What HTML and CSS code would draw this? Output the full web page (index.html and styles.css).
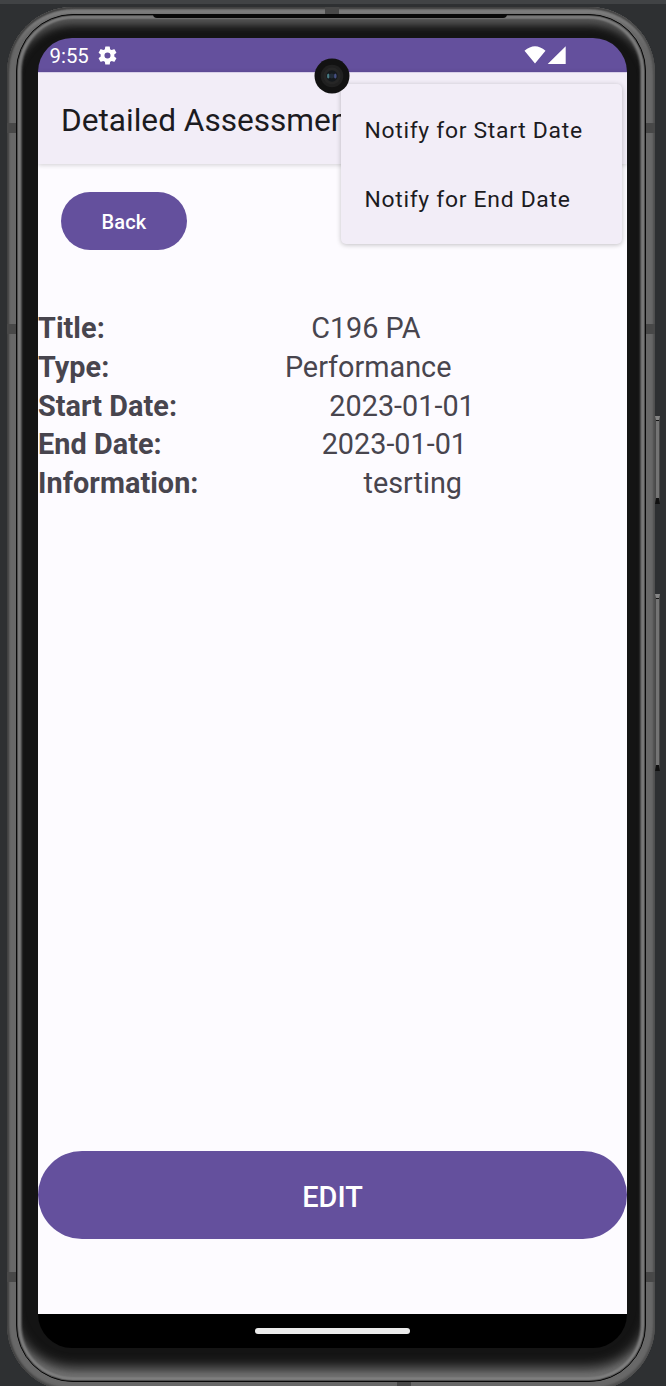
FILE: index.html
```html
<!DOCTYPE html>
<html lang="en">
<head>
<meta charset="utf-8">
<title>Detailed Assessment</title>
<link rel="stylesheet" href="styles.css">
</head>
<body>
<div class="desk">
  <span class="key key-power"></span>
  <span class="key key-volume"></span>
  <div class="phone">
    <span class="band band-top"></span>
    <span class="band band-bottom"></span>
    <span class="band band-l1"></span>
    <span class="band band-l2"></span>
    <span class="band band-l3"></span>
    <span class="band band-r1"></span>
    <span class="band band-r2"></span>
    <span class="band band-r3"></span>
    <div class="bezel">
      <span class="speaker"></span>
      <div class="screen">
        <div class="status">
          <span class="clock">9:55</span>
          <svg class="gear" viewBox="2 2 20 20"><path fill="#fff" d="M19.14 12.94c.04-.3.06-.61.06-.94s-.02-.64-.07-.94l2.03-1.58a.49.49 0 0 0 .12-.61l-1.92-3.32a.49.49 0 0 0-.59-.22l-2.39.96a7 7 0 0 0-1.62-.94l-.36-2.54a.48.48 0 0 0-.48-.41h-3.84a.48.48 0 0 0-.47.41l-.36 2.54c-.59.24-1.13.57-1.62.94l-2.39-.96a.48.48 0 0 0-.59.22L2.74 8.87a.48.48 0 0 0 .12.61l2.03 1.58c-.05.3-.09.63-.09.94s.02.64.07.94l-2.03 1.58a.49.49 0 0 0-.12.61l1.92 3.32c.12.22.37.29.59.22l2.39-.96c.5.38 1.03.7 1.62.94l.36 2.54c.05.24.24.41.48.41h3.84c.24 0 .44-.17.47-.41l.36-2.54a7 7 0 0 0 1.62-.94l2.39.96c.22.08.47 0 .59-.22l1.92-3.32a.48.48 0 0 0-.12-.61zM12 15.2a3.2 3.2 0 1 1 0-6.4 3.200 3.200 0 0 1 0 6.400z"/></svg>
          <svg class="signals" viewBox="0 0 42 18"><path fill="#fff" d="M0.500 4.800Q11-4.300 21.500 4.800L11 17.500ZM23.700 18L41.700 0.200V18Z"/></svg>
        </div>
        <header class="appbar">Detailed Assessment</header>
        <main class="content">
          <button class="back">Back</button>
          <dl class="details">
            <div class="row"><dt>Title:</dt><dd>C196 PA</dd></div>
            <div class="row"><dt>Type:</dt><dd>Performance</dd></div>
            <div class="row"><dt>Start Date:</dt><dd>2023-01-01</dd></div>
            <div class="row"><dt>End Date:</dt><dd>2023-01-01</dd></div>
            <div class="row"><dt>Information:</dt><dd>tesrting</dd></div>
          </dl>
          <button class="edit">EDIT</button>
        </main>
        <div class="nav"><span class="pill"></span></div>
        <div class="menu">
          <div class="item">Notify for Start Date</div>
          <div class="item">Notify for End Date</div>
        </div>
        <svg class="camera" viewBox="0 0 36 36"><circle cx="18" cy="18" r="17.500" fill="#121212"/><circle cx="18" cy="18" r="11.300" fill="#202020"/><circle cx="18" cy="18" r="8.500" fill="#262626"/><circle cx="18" cy="18" r="5.700" fill="#15191d"/><ellipse cx="14.300" cy="18" rx="1.300" ry="2.600" fill="#477b83"/><ellipse cx="21.300" cy="18" rx="1.300" ry="2.600" fill="#465084"/><circle cx="17.800" cy="18" r="2.400" fill="#222c38"/></svg>
      </div>
    </div>
  </div>
</div>
</body>
</html>
```
FILE: styles.css
```css
* { box-sizing: border-box; }
body { margin: 0; font-family: Roboto, sans-serif; }
.desk {
  position: relative;
  width: 666px;
  height: 1386px;
  padding: 3px 0 0 7px;
  overflow: hidden;
  background: #2e3032;
  border-top: 4px solid #414345;
}
.phone {
  position: relative;
  width: 648px;
  height: 1384px;
  padding: 7px 9px;
  border-radius: 66px;
  background: #686868;
  box-shadow: inset 2px 0 2px #424242, inset -2px 0 2px #505050, inset 0 2px 2px #3c3c3c, inset 0 -3px 2px #555, inset 0 6px 4px -3px #666, inset 0 10px 5px -5px #999;
}
.bezel {
  position: relative;
  width: 630px;
  height: 1368px;
  padding: 23px 20px 0 21px;
  border: 1px solid #080808;
  border-radius: 57px;
  background: #141414;
  box-shadow:
    inset 0 0 1px 1px #4a4a4a,
    inset 0 -8px 6px -3px #808080,
    inset 0 0 2px 4px #7c7c7c,
    inset 0 0 2px 5px #454545,
    inset 0 14px 8px -4px #5a5a5a,
    inset 0 -19px 12px -5px #686868;
}
.band { position: absolute; background: #484848; }
.band-top { left: 318px; top: 0; width: 14px; height: 8px; }
.band-bottom { left: 390px; top: 1375px; width: 14px; height: 8px; }
.band-l1, .band-l2, .band-l3 { left: 0; width: 10px; height: 10px; }
.band-r1, .band-r2, .band-r3 { right: 0; width: 9px; height: 10px; }
.band-l1, .band-r1 { top: 116px; }
.band-l2, .band-r2 { top: 317px; }
.band-l3, .band-r3 { top: 1265px; }
.speaker {
  position: absolute;
  left: 136px;
  top: -1px;
  width: 354px;
  height: 4px;
  border-radius: 0 0 8px 8px;
  background: #080808;
}
.key {
  position: absolute;
  left: 655px;
  width: 5px;
  border: 1px solid #494949;
  border-top: 4px solid #858585;
  border-bottom: 6px solid #101010;
  background: #747474;
  box-shadow: inset 0 1px #151515;
}
.key-power { top: 412px; height: 88px; }
.key-volume { top: 590px; height: 177px; }
.screen {
  position: relative;
  display: flex;
  flex-direction: column;
  width: 589px;
  height: 1310px;
  border-radius: 34px;
  overflow: hidden;
}
.status {
  display: flex;
  align-items: center;
  height: 34px;
  padding: 1px 61px 0 11.5px;
  background: #64509d;
  color: #fff;
}
.clock { width: 48px; font-size: 20.4px; line-height: 34px; }
.gear { width: 19px; height: 19px; margin-top: -1px; }
.signals { width: 42px; height: 18px; margin-left: auto; margin-top: -2px; }
.appbar {
  position: relative;
  height: 92px;
  padding: 2px 0 0 23px;
  background: #f2edf7;
  border-top: 1px solid #d8cfe8;
  box-shadow: 0 1px 5px rgba(0, 0, 0, .18);
  color: #1c1b1f;
  font-size: 31.6px;
  line-height: 91px;
  white-space: nowrap;
}
.content { display: flex; flex: 1; flex-direction: column; background: #fdfbff; }
button { border: 0; background: #64509d; color: #fff; font-family: inherit; font-weight: 500; }
.back {
  width: 126px;
  height: 58px;
  margin: 28px 0 0 23px;
  padding: 2px 0 0;
  border-radius: 29px;
  font-size: 20px;
  letter-spacing: .15px;
}
.details { margin: 59px 0 0; color: #48454e; font-size: 28.8px; }
.row { display: flex; height: 38.8px; line-height: 38.8px; }
dt { font-weight: 700; letter-spacing: .05px; }
dd { flex: 1; margin: 0; text-align: center; }
.edit {
  width: 100%;
  height: 88px;
  margin: auto 0 75px;
  padding: 4px 0 0;
  border-radius: 44px;
  font-size: 28.9px;
}
.nav { display: flex; justify-content: center; height: 34px; padding-top: 14px; background: #000; }
.pill { width: 155px; height: 6px; border-radius: 3px; background: #ebebeb; }
.menu {
  position: absolute;
  left: 303px;
  top: 46px;
  width: 281px;
  height: 160px;
  padding: 12px 23.4px;
  border-radius: 5px;
  background: #f2edf7;
  box-shadow: 0 1px 5px rgba(0, 0, 0, .24);
}
.item { height: 68.8px; color: #1c1b1f; font-size: 22.9px; line-height: 69px; letter-spacing: .71px; white-space: nowrap; }
.camera { position: absolute; left: 276px; top: 20px; width: 36px; height: 36px; }
```
